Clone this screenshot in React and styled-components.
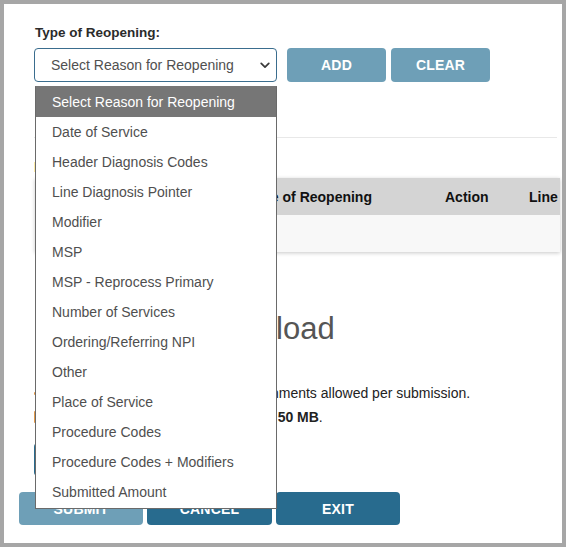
import React from "react";
import styled, { createGlobalStyle } from "styled-components";

const GlobalStyle = createGlobalStyle`
  html, body {
    margin: 0;
    padding: 0;
    background: #ffffff;
  }
  body {
    font-family: "Liberation Sans", Arial, sans-serif;
    color: #222222;
  }
`;

const REASONS = [
  "Select Reason for Reopening",
  "Date of Service",
  "Header Diagnosis Codes",
  "Line Diagnosis Pointer",
  "Modifier",
  "MSP",
  "MSP - Reprocess Primary",
  "Number of Services",
  "Ordering/Referring NPI",
  "Other",
  "Place of Service",
  "Procedure Codes",
  "Procedure Codes + Modifiers",
  "Submitted Amount",
];

const Frame = styled.div`
  position: relative;
  box-sizing: border-box;
  width: 566px;
  height: 547px;
  border: 4px solid #a6a6a6;
  background: #ffffff;
  overflow: hidden;
`;

const Content = styled.div`
  padding: 21px 2px 0 30px;
`;

const FieldLabel = styled.div`
  font-size: 13.5px;
  line-height: 16px;
  font-weight: bold;
  color: #2b2b2b;
  padding-left: 1px;
`;

const ControlRow = styled.div`
  display: flex;
  align-items: stretch;
  gap: 5px;
  margin-top: 7px;
`;

const SelectWrap = styled.div`
  position: relative;
  width: 243px;
  margin-right: 5px;
`;

const SelectBox = styled.div`
  box-sizing: border-box;
  height: 34px;
  display: flex;
  align-items: center;
  justify-content: space-between;
  padding: 0 6px 0 16px;
  border: 1px solid #3a6d8e;
  border-radius: 4px;
  background: #ffffff;
  font-size: 14px;
  color: #505050;
`;

const OptionList = styled.ul`
  position: absolute;
  top: 38px;
  left: 1px;
  width: 242px;
  box-sizing: border-box;
  margin: 0;
  padding: 0 0 1px;
  list-style: none;
  background: #ffffff;
  border: 1px solid #6a6a6a;
  border-top-color: #767676;
  z-index: 10;
`;

const Option = styled.li`
  height: 30px;
  display: flex;
  align-items: center;
  padding-left: 16px;
  font-size: 14px;
  color: ${(p) => (p.active ? "#ffffff" : "#4f4f4f")};
  background: ${(p) => (p.active ? "#767676" : "transparent")};
`;

const Button = styled.button`
  box-sizing: border-box;
  height: ${(p) => p.height || 34}px;
  width: ${(p) => p.width}px;
  border: none;
  border-radius: 4px;
  background: ${(p) => (p.dim ? "#6e9fb7" : "#286b8e")};
  color: #ffffff;
  font-family: "Liberation Sans", Arial, sans-serif;
  font-size: 14px;
  font-weight: bold;
  letter-spacing: 0.2px;
  padding: 0;
`;

const Divider = styled.hr`
  margin: 55px 3px 0 0;
  border: none;
  border-top: 1px solid #e8e8e8;
`;

const SectionTitle = styled.div`
  margin-top: 21px;
  font-size: 14px;
  line-height: 16px;
  font-weight: bold;
  color: #e0892b;
`;

const Table = styled.div`
  margin: 3px 0 0 1px;
  width: 525px;
  box-shadow: 0 1px 4px rgba(0, 0, 0, 0.22);
`;

const TableRow = styled.div`
  display: grid;
  grid-template-columns: 212px 198px 84px 1fr;
  height: 37px;
  align-items: center;
  background: ${(p) => (p.head ? "#d4d4d4" : "#f8f8f8")};
  font-size: 14px;
  font-weight: ${(p) => (p.head ? "bold" : "normal")};
  color: #111111;
  white-space: nowrap;
`;

const Cell = styled.div`
  padding-left: ${(p) => p.pad || 0}px;
`;

const UploadHeading = styled.h2`
  display: flex;
  align-items: center;
  gap: 9px;
  margin: 59px 0 0;
  font-size: 31px;
  line-height: 36px;
  font-weight: normal;
  color: #555555;
`;

const Note = styled.p`
  margin: ${(p) => p.gap || 0}px 0 0;
  font-size: 14px;
  line-height: 20px;
  color: #222222;
  display: flex;
  align-items: center;
  gap: ${(p) => p.indent}px;
  white-space: nowrap;
`;

const Marker = styled.span`
  flex: none;
  display: inline-block;
  width: 2px;
  height: ${(p) => p.size}px;
  background: #e39a4a;
  border-radius: 1px;
`;

const BrowseButton = styled(Button)`
  margin-top: 16px;
  padding: 0 16px;
`;

const FooterBar = styled.div`
  display: flex;
  gap: 4px;
  margin-top: 16px;
  padding-left: 15px;
`;

const Chevron = () => (
  <svg width="10" height="7" viewBox="0 0 10 7" fill="none">
    <path d="M1.2 1.3 5 5.2 8.8 1.3" stroke="#3a3a3a" strokeWidth="1.7" strokeLinecap="round" strokeLinejoin="round" />
  </svg>
);

const Paperclip = () => (
  <svg width="28" height="28" viewBox="0 0 24 24" fill="none" stroke="#e0892b" strokeWidth="2" strokeLinecap="round" strokeLinejoin="round">
    <path d="m21.4 11.1-9.2 9.2a6 6 0 0 1-8.5-8.5l8.6-8.6a4 4 0 0 1 5.7 5.7l-8.6 8.6a2 2 0 0 1-2.8-2.8l8.5-8.5" />
  </svg>
);

const App = () => (
  <>
    <GlobalStyle />
    <Frame>
      <Content>
        <FieldLabel>Type of Reopening:</FieldLabel>
        <ControlRow>
          <SelectWrap>
            <SelectBox>
              <span>Select Reason for Reopening</span>
              <Chevron />
            </SelectBox>
            <OptionList>
              {REASONS.map((r, i) => (
                <Option key={r} active={i === 0}>
                  {r}
                </Option>
              ))}
            </OptionList>
          </SelectWrap>
          <Button dim width={99}>ADD</Button>
          <Button dim width={99}>CLEAR</Button>
        </ControlRow>

        <Divider />
        <SectionTitle>Line Level Reopenings</SectionTitle>

        <Table>
          <TableRow head>
            <Cell pad={14}>Line</Cell>
            <Cell>Type of Reopening</Cell>
            <Cell>Action</Cell>
            <Cell>Line</Cell>
          </TableRow>
          <TableRow>
            <Cell />
            <Cell />
            <Cell />
            <Cell />
          </TableRow>
        </Table>

        <UploadHeading>
          <Paperclip />
          <span>Attachment Upload</span>
        </UploadHeading>
        <Note gap={36} indent={29}>
          <Marker size={3} />
          <span>PDF only. A maximum of 10 attachments allowed per submission.</span>
        </Note>
        <Note gap={4} indent={37}>
          <Marker size={12} />
          <span>
            Maximum size per attachment is <b>50 MB</b>.
          </span>
        </Note>
        <BrowseButton height={33}>BROWSE</BrowseButton>
      </Content>

      <FooterBar>
        <Button dim width={124} height={33}>SUBMIT</Button>
        <Button width={125} height={33}>CANCEL</Button>
        <Button width={124} height={33}>EXIT</Button>
      </FooterBar>
    </Frame>
  </>
);

export default App;
